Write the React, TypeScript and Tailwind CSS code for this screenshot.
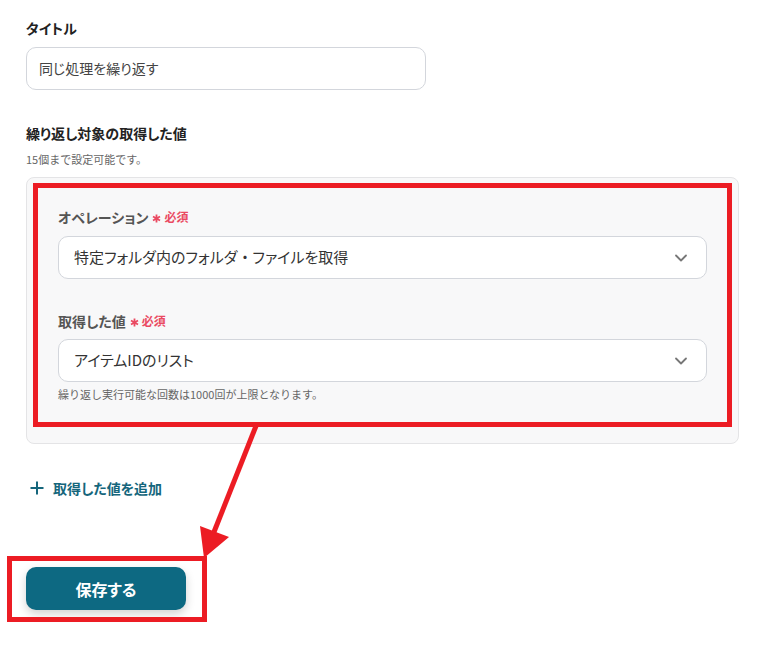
import React from 'react';
import { ChevronDown } from 'lucide-react';

const font = { fontFamily: '"Noto Sans CJK JP", "Noto Sans", sans-serif' };

const SelectBox: React.FC<{ children: React.ReactNode }> = ({ children }) => (
  <div className="flex items-center justify-between h-[43px] px-[15px] bg-white border border-[#d3d6dc] rounded-[10px]">
    <span className="text-[15px] text-[#333]">{children}</span>
    <ChevronDown className="text-[#777]" size={20} strokeWidth={2.2} />
  </div>
);

const FieldLabel: React.FC<{ text: string }> = ({ text }) => (
  <div className="flex items-center h-5 text-[14px] font-bold text-[#555]">
    {text}
    <span className="ml-[4px] text-[#ea4a62] text-[12px] font-bold flex items-center">
      <svg width="9" height="9" viewBox="0 0 10 10" className="mr-[3px] mt-[3px]">
        <path d="M5 0.5v9M1.1 2.75l7.8 4.5M1.1 7.25l7.8-4.5" stroke="currentColor" strokeWidth="2" />
      </svg>
      必須
    </span>
  </div>
);

const App: React.FC = () => {
  return (
    <div className="relative min-h-screen bg-white pl-[26px] pr-[35px] pt-[18px] [font-feature-settings:'palt']" style={font}>
      {/* Title */}
      <div className="text-[14px] leading-5 font-bold text-[#222]">タイトル</div>
      <div className="mt-[9px] w-[400px] h-[43px] flex items-center px-[12px] border border-[#d3d6dc] rounded-[10px] text-[14px] text-[#444]">
        同じ処理を繰り返す
      </div>

      {/* Loop target */}
      <div className="mt-[33px] text-[14px] leading-5 font-bold text-[#222]">繰り返し対象の取得した値</div>
      <div className="mt-[8px] text-[11px] leading-4 text-[#666] [font-feature-settings:normal]">15個まで設定可能です。</div>

      <div className="relative mt-[10px] border border-[#e4e4e6] rounded-lg bg-[#f8f8f9] px-[31px] pt-[29px] pb-[41px]">
        <FieldLabel text="オペレーション" />
        <div className="mt-[9px]">
          <SelectBox>
            特定フォルダ内のフォルダ<span className="[font-feature-settings:normal]">・</span>ファイルを取得
          </SelectBox>
        </div>

        <div className="mt-[32px]">
          <FieldLabel text="取得した値" />
        </div>
        <div className="mt-[8px]">
          <SelectBox>アイテムIDのリスト</SelectBox>
        </div>
        <div className="mt-[4px] text-[11px] leading-4 text-[#666] [font-feature-settings:normal]">
          繰り返し実行可能な回数は1000回が上限となります。
        </div>

        {/* annotation box */}
        <div className="absolute left-[6px] top-[5px] w-[699px] h-[244px] border-[5px] border-[#ec1c24]" />
      </div>

      {/* Add value */}
      <div className="mt-[34px] flex items-center h-5 text-[14px] font-bold text-[#15667c]">
        <svg width="14" height="14" viewBox="0 0 14 14" className="ml-[4px] mr-[9px]">
          <path d="M7 0.5v13M0.5 7h13" stroke="currentColor" strokeWidth="2" />
        </svg>
        取得した値を追加
      </div>

      {/* Save button */}
      <div className="relative mt-[69px] w-[160px]">
        <button className="w-[160px] h-[43px] rounded-[10px] bg-[#0d6982] text-white text-[16px] font-bold shadow-[0_4px_10px_rgba(0,0,0,0.18)]">
          保存する
        </button>
        <div className="absolute left-[-19px] top-[-11px] w-[200px] h-[66px] border-[5px] border-[#ec1c24]" />
      </div>

      {/* arrow */}
      <svg className="absolute left-0 top-0 pointer-events-none" width="774" height="667">
        <line x1="256" y1="426" x2="214" y2="532" stroke="#ec1c24" strokeWidth="5" />
        <polygon points="200,526 229,537 204,558" fill="#ec1c24" />
      </svg>
    </div>
  );
};

export default App;
